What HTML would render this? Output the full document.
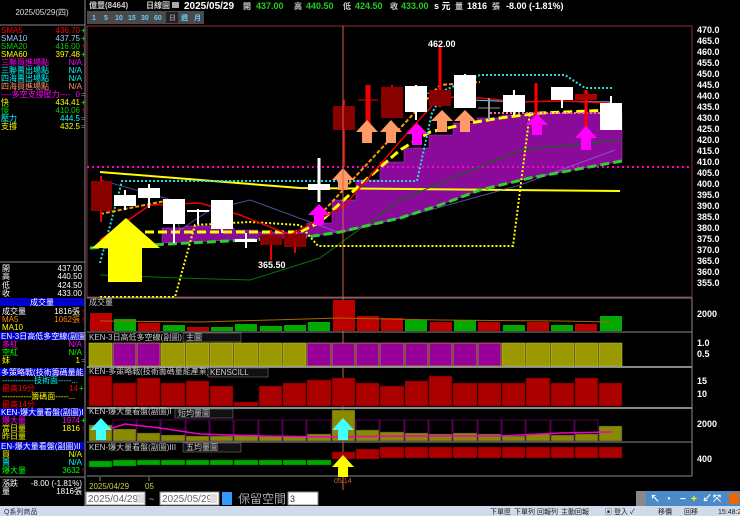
<!DOCTYPE html>
<html><head><meta charset="utf-8">
<style>
html,body{margin:0;padding:0;background:#000;width:740px;height:516px;overflow:hidden}
svg{display:block}
text{font-family:"Liberation Sans","Noto Sans CJK TC",sans-serif}
.s{font-size:8px}
.ax{font-size:9px;fill:#fff;font-weight:bold}
</style></head><body>
<svg width="740" height="516" viewBox="0 0 740 516" xmlns="http://www.w3.org/2000/svg">
<rect width="740" height="516" fill="#000"/>
<!-- left panel -->
<text x="42" y="15" class="s" fill="#ddd" text-anchor="middle">2025/05/29(四)</text>
<line x1="85" y1="0" x2="85" y2="506" stroke="#888"/>
<line x1="0" y1="25" x2="85" y2="25" stroke="#888"/>
<g class="s">
<text x="1" y="33" fill="#f00">SMA5</text><text x="80" y="33" fill="#f00" text-anchor="end">436.70</text><text x="81" y="33" fill="#0f0">+</text>
<text x="1" y="41" fill="#9cf">SMA10</text><text x="80" y="41" fill="#9cf" text-anchor="end">437.75</text><text x="81" y="41" fill="#0f0">+</text>
<text x="1" y="49" fill="#0c0">SMA20</text><text x="80" y="49" fill="#0c0" text-anchor="end">416.00</text><text x="81" y="49" fill="#f00">↑</text>
<text x="1" y="57" fill="#ff0">SMA60</text><text x="80" y="57" fill="#ff0" text-anchor="end">397.48</text><text x="81" y="57" fill="#0f0">+</text>
<text x="1" y="65" fill="#f0f">三聯買進場點</text><text x="82" y="65" fill="#f0f" text-anchor="end">N/A</text>
<text x="1" y="73" fill="#0ff">三聯賣出場點</text><text x="82" y="73" fill="#0ff" text-anchor="end">N/A</text>
<text x="1" y="81" fill="#0ff">四海賣出場點</text><text x="82" y="81" fill="#0ff" text-anchor="end">N/A</text>
<text x="1" y="89" fill="#f96">四海買進場點</text><text x="82" y="89" fill="#f96" text-anchor="end">N/A</text>
<text x="1" y="97" fill="#f0f">----多空支撐壓力----</text><text x="80" y="97" fill="#f0f" text-anchor="end">0</text><text x="81" y="97" fill="#888">=</text>
<text x="1" y="105" fill="#ff0">快</text><text x="80" y="105" fill="#ff0" text-anchor="end">434.41</text><text x="81" y="105" fill="#0f0">+</text>
<text x="1" y="113" fill="#0c0">慢</text><text x="80" y="113" fill="#0c0" text-anchor="end">410.06</text><text x="81" y="113" fill="#f00">↑</text>
<text x="1" y="121" fill="#0ff">壓力</text><text x="80" y="121" fill="#0ff" text-anchor="end">444.5</text><text x="81" y="121" fill="#888">=</text>
<text x="1" y="129" fill="#ff0">支撐</text><text x="80" y="129" fill="#ff0" text-anchor="end">432.5</text><text x="81" y="129" fill="#888">=</text>
<line x1="0" y1="262" x2="85" y2="262" stroke="#888"/>
<text x="2" y="271" fill="#fff">開</text><text x="82" y="271" fill="#fff" text-anchor="end">437.00</text>
<text x="2" y="279" fill="#fff">高</text><text x="82" y="279" fill="#fff" text-anchor="end">440.50</text>
<text x="2" y="288" fill="#fff">低</text><text x="82" y="288" fill="#fff" text-anchor="end">424.50</text>
<text x="2" y="296" fill="#fff">收</text><text x="82" y="296" fill="#fff" text-anchor="end">433.00</text>
<rect x="0" y="298" width="84" height="8" fill="#00c"/><text x="42" y="305" fill="#fff" text-anchor="middle">成交量</text>
<text x="2" y="314" fill="#fff">成交量</text><text x="80" y="314" fill="#fff" text-anchor="end">1816張</text><text x="81" y="314" fill="#f00">↑</text>
<text x="2" y="322" fill="#f80">MA5</text><text x="80" y="322" fill="#f80" text-anchor="end">1062張</text><text x="81" y="322" fill="#f00">↑</text>
<text x="2" y="330" fill="#ff0">MA10</text>
<rect x="0" y="332" width="84" height="8" fill="#00c"/><text x="1" y="339" fill="#fff">EN-3日高低多空線(副圖</text>
<text x="2" y="347" fill="#f0f">多紅</text><text x="82" y="347" fill="#f0f" text-anchor="end">N/A</text>
<text x="2" y="355" fill="#0f0">空紅</text><text x="82" y="355" fill="#0f0" text-anchor="end">N/A</text>
<text x="2" y="363" fill="#ff0">妹</text><text x="80" y="363" fill="#ff0" text-anchor="end">1</text><text x="81" y="363" fill="#888">=</text>
<rect x="0" y="368" width="84" height="8" fill="#00c"/><text x="1" y="375" fill="#fff">多策略戰(技術籌碼量能</text>
<text x="2" y="383" fill="#0ff">------------技術面-----...</text>
<text x="2" y="391" fill="#f00">最高19分</text><text x="78" y="391" fill="#f00" text-anchor="end">14</text><text x="79" y="391" fill="#0f0">+</text>
<text x="2" y="399" fill="#ff0">-----------籌碼面-----...</text>
<text x="2" y="407" fill="#f00">最高14分</text>
<rect x="0" y="408" width="84" height="8" fill="#00c"/><text x="1" y="415" fill="#fff">KEN-爆大量看盤(副圖)I</text>
<text x="2" y="423" fill="#f0f">爆大量</text><text x="80" y="423" fill="#f0f" text-anchor="end">1974</text><text x="81" y="423" fill="#0f0">+</text>
<text x="2" y="431" fill="#ff0">當日量</text><text x="80" y="431" fill="#ff0" text-anchor="end">1816</text><text x="81" y="431" fill="#f00">↑</text>
<text x="2" y="439" fill="#ff0">昨日量</text>
<rect x="0" y="442" width="84" height="8" fill="#00c"/><text x="1" y="449" fill="#fff">EN-爆大量看盤(副圖)II</text>
<text x="2" y="457" fill="#ff0">買</text><text x="82" y="457" fill="#ff0" text-anchor="end">N/A</text>
<text x="2" y="465" fill="#0ff">賣</text><text x="82" y="465" fill="#0ff" text-anchor="end">N/A</text>
<text x="2" y="473" fill="#0f0">爆大量</text><text x="80" y="473" fill="#0f0" text-anchor="end">3632</text><text x="81" y="473" fill="#f00">↑</text>
<line x1="0" y1="477" x2="85" y2="477" stroke="#888"/>
<text x="2" y="486" fill="#fff">漲跌</text><text x="82" y="486" fill="#fff" text-anchor="end">-8.00 (-1.81%)</text>
<text x="2" y="494" fill="#fff">量</text><text x="82" y="494" fill="#fff" text-anchor="end">1816張</text>
</g>
<!-- top bar -->
<g font-size="9" font-weight="bold">
<text x="89" y="8" fill="#ccc" font-size="8">億豐(8464)</text>
<text x="146" y="8" fill="#ccc" font-size="8">日線圖</text>
<rect x="172" y="2" width="7" height="6" fill="#aaa"/>
<text x="184" y="9" fill="#fff" font-size="10">2025/05/29</text>
<text x="243" y="9" fill="#ccc" font-size="8">開</text><text x="256" y="9" fill="#2c2">437.00</text>
<text x="294" y="9" fill="#ccc" font-size="8">高</text><text x="306" y="9" fill="#2c2">440.50</text>
<text x="343" y="9" fill="#ccc" font-size="8">低</text><text x="355" y="9" fill="#2c2">424.50</text>
<text x="390" y="9" fill="#ccc" font-size="8">收</text><text x="401" y="9" fill="#2c2">433.00</text>
<text x="434" y="9" fill="#fff">s 元</text>
<text x="455" y="9" fill="#ccc" font-size="8">量</text><text x="467" y="9" fill="#fff">1816</text><text x="492" y="9" fill="#ccc" font-size="8">張</text>
<text x="506" y="9" fill="#fff">-8.00 (-1.81%)</text>
</g>
<rect x="87" y="11" width="117" height="13" fill="#4a4a4a"/>
<g font-size="7" fill="#6cf" font-weight="bold">
<text x="92" y="20">1</text><text x="104" y="20">5</text><text x="115" y="20">10</text><text x="128" y="20">15</text><text x="141" y="20">30</text><text x="154" y="20">60</text>
<rect x="166" y="12" width="12" height="11" fill="#222"/><text x="169" y="20" fill="#888">日</text>
<text x="181" y="20">週</text><text x="194" y="20">月</text></g>
<!-- main chart frame -->
<rect x="87" y="26" width="605" height="271" fill="none" stroke="#8a3040"/>
<!-- right axis -->
<g class="ax">
<text x="697" y="33">470.0</text><text x="697" y="44">465.0</text><text x="697" y="55">460.0</text><text x="697" y="66">455.0</text><text x="697" y="77">450.0</text><text x="697" y="88">445.0</text><text x="697" y="99">440.0</text><text x="697" y="110">435.0</text><text x="697" y="121">430.0</text><text x="697" y="132">425.0</text><text x="697" y="143">420.0</text><text x="697" y="154">415.0</text><text x="697" y="165">410.0</text><text x="697" y="176">405.0</text><text x="697" y="187">400.0</text><text x="697" y="198">395.0</text><text x="697" y="209">390.0</text><text x="697" y="220">385.0</text><text x="697" y="231">380.0</text><text x="697" y="242">375.0</text><text x="697" y="253">370.0</text><text x="697" y="264">365.0</text><text x="697" y="275">360.0</text><text x="697" y="286">355.0</text>
<text x="697" y="317">2000</text><text x="697" y="346">1.0</text><text x="697" y="357">0.5</text>
<text x="697" y="384">15</text><text x="697" y="397">10</text><text x="697" y="427">2000</text><text x="697" y="462">400</text>
</g>
<!-- purple cloud -->
<g fill="#8a0a9a" stroke="#b040c0" stroke-width="0.5">
<path d="M162,242 L162,228 L186,228 L186,226 L210,226 L210,228 L234,228 L234,230 L258,230 L258,232 L307,232 L307,223 L332,223 L332,200 L356,200 L356,180 L380,180 L380,162 L404,162 L404,148 L429,148 L429,135 L453,135 L453,123 L477,123 L477,118 L502,118 L502,115 L526,115 L526,113 L622,113 L622,161 L600,165 L530,178 L480,190 L440,205 L400,218 L340,232 L307,237 L162,243 Z"/>
</g>
<!-- lines -->
<line x1="87" y1="167" x2="692" y2="167" stroke="#f0c" stroke-width="2" stroke-dasharray="2,3"/>
<polyline points="100,172 300,188 620,191" fill="none" stroke="#ff0" stroke-width="2"/>
<polyline points="100,180 172,200 180,230 210,210 250,200 340,233 430,210 520,185 615,150" fill="none" stroke="#8080ff" stroke-width="1" opacity="0.6"/>
<polyline points="100,275 180,278 250,280 320,258 400,200 520,150 620,140" fill="none" stroke="#070" stroke-width="1"/>
<polyline points="90,248 307,237 340,232 400,218 440,205 480,190 530,178 600,165 622,161" fill="none" stroke="#3c3" stroke-width="3" stroke-dasharray="9,4"/>
<polyline points="145,232 300,232 320,222 360,185 400,150 430,132 470,123 500,118 540,113 615,110" fill="none" stroke="#ff0" stroke-width="3" stroke-dasharray="9,4"/>
<polyline points="100,297 175,297 195,225 250,222 300,225 318,246 513,246 530,112" fill="none" stroke="#ff0" stroke-width="2" stroke-dasharray="2,2"/>
<polyline points="100,263 122,181 417,181 432,113 445,90 480,75 565,75 585,88 612,88" fill="none" stroke="#3dd" stroke-width="2" stroke-dasharray="2,2"/>
<polyline points="100,214 170,200" fill="none" stroke="#f90" stroke-width="2" stroke-dasharray="4,2"/>
<polyline points="320,215 440,85 480,82" fill="none" stroke="#f90" stroke-width="2" stroke-dasharray="4,2"/>
<polyline points="490,113 612,113" fill="none" stroke="#f6a" stroke-width="2" stroke-dasharray="2,2"/>
<polyline points="420,92 470,100 520,102 560,101 612,102" fill="none" stroke="#6cf" stroke-width="1"/>
<polyline points="100,240 150,205 200,203 240,215 290,235 300,230 345,205 410,130 440,97 480,98 520,102 560,101 610,103" fill="none" stroke="#e00" stroke-width="1.5"/>
<!-- candles -->
<g>
<line x1="101" y1="176" x2="101" y2="222" stroke="#e00" stroke-width="2"/><rect x="91" y="181" width="21" height="30" fill="#800"/>
<line x1="125" y1="190" x2="125" y2="210" stroke="#fff" stroke-width="2"/><rect x="114" y="195" width="22" height="11" fill="#fff"/>
<line x1="149" y1="184" x2="149" y2="208" stroke="#fff" stroke-width="2"/><rect x="138" y="188" width="22" height="10" fill="#fff"/>
<line x1="174" y1="199" x2="174" y2="243" stroke="#fff" stroke-width="2"/><rect x="163" y="199" width="22" height="25" fill="#fff"/>
<line x1="198" y1="209" x2="198" y2="224" stroke="#fff" stroke-width="2"/><rect x="187" y="210" width="22" height="2" fill="#fff"/>
<line x1="222" y1="200" x2="222" y2="233" stroke="#fff" stroke-width="2"/><rect x="211" y="200" width="22" height="29" fill="#fff"/>
<line x1="246" y1="233" x2="246" y2="248" stroke="#fff" stroke-width="2"/><rect x="235" y="239" width="22" height="3" fill="#fff"/>
<line x1="271" y1="230" x2="271" y2="260" stroke="#e00" stroke-width="2"/><rect x="260" y="235" width="22" height="10" fill="#800"/>
<line x1="295" y1="230" x2="295" y2="253" stroke="#e00" stroke-width="2"/><rect x="284" y="234" width="22" height="13" fill="#800"/>
<line x1="344" y1="100" x2="344" y2="167" stroke="#e00" stroke-width="2"/><rect x="333" y="106" width="22" height="24" fill="#800"/>
<line x1="368" y1="85" x2="368" y2="132" stroke="#e00" stroke-width="5"/><line x1="358" y1="100" x2="378" y2="100" stroke="#e00"/>
<line x1="392" y1="85" x2="392" y2="118" stroke="#e00" stroke-width="2"/><rect x="381" y="87" width="22" height="31" fill="#800"/>
<line x1="416" y1="85" x2="416" y2="120" stroke="#fff" stroke-width="2"/><rect x="405" y="86" width="22" height="26" fill="#fff"/>
<line x1="440" y1="47" x2="440" y2="107" stroke="#f00" stroke-width="3"/><rect x="429" y="90" width="22" height="16" fill="#800"/>
<line x1="465" y1="74" x2="465" y2="108" stroke="#fff" stroke-width="2"/><rect x="454" y="75" width="22" height="33" fill="#fff"/>
<line x1="489" y1="98" x2="489" y2="120" stroke="#999" stroke-width="2"/><line x1="478" y1="108" x2="500" y2="108" stroke="#999"/>
<line x1="514" y1="90" x2="514" y2="115" stroke="#fff" stroke-width="2"/><rect x="503" y="95" width="22" height="17" fill="#fff"/>
<line x1="536" y1="83" x2="536" y2="130" stroke="#f00" stroke-width="3"/>
<line x1="562" y1="87" x2="562" y2="108" stroke="#fff" stroke-width="2"/><rect x="551" y="87" width="22" height="13" fill="#fff"/>
<line x1="586" y1="90" x2="586" y2="130" stroke="#f00" stroke-width="3"/><rect x="575" y="94" width="22" height="6" fill="#a00"/>
<line x1="611" y1="96" x2="611" y2="130" stroke="#fff" stroke-width="2"/><rect x="600" y="103" width="22" height="27" fill="#fff"/>
</g>
<!-- arrows -->
<polygon points="92,248 126,218 160,248 142,248 142,282 108,282 108,248" fill="#ff0"/>
<g fill="#f96">
<polygon points="332,180 343,168 354,180 348,180 348,190 338,190 338,180"/>
<polygon points="356,132 367,120 378,132 372,132 372,143 362,143 362,132"/>
<polygon points="380,132 391,120 402,132 396,132 396,143 386,143 386,132"/>
<polygon points="431,121 442,110 453,121 447,121 447,132 437,132 437,121"/>
<polygon points="454,121 465,110 476,121 470,121 470,132 460,132 460,121"/>
</g>
<g fill="#f0f">
<polygon points="308,215 319,204 330,215 324,215 324,225 314,225 314,215"/>
<polygon points="406,134 417,123 428,134 422,134 422,145 412,145 412,134"/>
<polygon points="526,125 537,114 548,125 542,125 542,135 532,135 532,125"/>
<polygon points="575,138 586,126 597,138 591,138 591,150 581,150 581,138"/>
</g>
<line x1="343" y1="26" x2="343" y2="490" stroke="#c64" stroke-width="1"/>
<line x1="319" y1="158" x2="319" y2="202" stroke="#fff" stroke-width="3"/><rect x="308" y="184" width="22" height="6" fill="#fff"/>
<text x="428" y="47" fill="#fff" font-size="9" font-weight="bold">462.00</text>
<text x="258" y="268" fill="#fff" font-size="9" font-weight="bold">365.50</text>
<!-- panel separators -->
<g stroke="#888"><line x1="87" y1="298" x2="692" y2="298"/><line x1="87" y1="332" x2="692" y2="332"/><line x1="87" y1="367" x2="692" y2="367" stroke-width="2"/><line x1="87" y1="408" x2="692" y2="408" stroke-width="2"/><line x1="87" y1="442" x2="692" y2="442"/><line x1="87" y1="476" x2="692" y2="476"/><line x1="692" y1="298" x2="692" y2="476"/></g>
<!-- volume -->
<g>
<rect x="90" y="313" width="22" height="18" fill="#b00"/><rect x="114" y="319" width="22" height="12" fill="#0a0"/><rect x="138" y="323" width="22" height="8" fill="#b00"/><rect x="163" y="325" width="22" height="6" fill="#0a0"/><rect x="187" y="327" width="22" height="4" fill="#b00"/><rect x="211" y="327" width="22" height="4" fill="#0a0"/><rect x="235" y="324" width="22" height="7" fill="#0a0"/><rect x="260" y="326" width="22" height="5" fill="#0a0"/><rect x="284" y="325" width="22" height="6" fill="#0a0"/><rect x="308" y="322" width="22" height="9" fill="#0a0"/><rect x="333" y="300" width="22" height="31" fill="#b00"/><rect x="357" y="316" width="22" height="15" fill="#b00"/><rect x="381" y="318" width="22" height="13" fill="#b00"/><rect x="405" y="320" width="22" height="11" fill="#0a0"/><rect x="430" y="322" width="22" height="9" fill="#b00"/><rect x="454" y="320" width="22" height="11" fill="#0a0"/><rect x="478" y="322" width="22" height="9" fill="#b00"/><rect x="503" y="325" width="22" height="6" fill="#0a0"/><rect x="527" y="322" width="22" height="9" fill="#b00"/><rect x="551" y="325" width="22" height="6" fill="#0a0"/><rect x="575" y="324" width="22" height="7" fill="#b00"/><rect x="600" y="316" width="22" height="15" fill="#0a0"/>
<polyline points="100,321 200,322 340,318 440,320 560,321 612,322" fill="none" stroke="#a60" stroke-width="1"/>
</g>
<text x="89" y="305" class="s" fill="#ccc">成交量</text>
<!-- panel 2 -->
<g stroke="#cc4" stroke-width="0.5">
<rect x="89" y="343" width="23" height="23" fill="#9a9a00"/><rect x="113" y="343" width="23" height="23" fill="#909"/><rect x="137" y="343" width="23" height="23" fill="#909"/>
<rect x="161" y="343" width="24" height="23" fill="#9a9a00"/><rect x="186" y="343" width="23" height="23" fill="#9a9a00"/><rect x="210" y="343" width="23" height="23" fill="#9a9a00"/><rect x="234" y="343" width="24" height="23" fill="#9a9a00"/><rect x="259" y="343" width="23" height="23" fill="#9a9a00"/><rect x="283" y="343" width="23" height="23" fill="#9a9a00"/>
<rect x="307" y="343" width="24" height="23" fill="#909"/><rect x="332" y="343" width="23" height="23" fill="#909"/><rect x="356" y="343" width="23" height="23" fill="#909"/><rect x="380" y="343" width="24" height="23" fill="#909"/><rect x="405" y="343" width="23" height="23" fill="#909"/><rect x="429" y="343" width="23" height="23" fill="#909"/><rect x="453" y="343" width="24" height="23" fill="#909"/><rect x="478" y="343" width="23" height="23" fill="#909"/>
<rect x="502" y="343" width="23" height="23" fill="#9a9a00"/><rect x="526" y="343" width="24" height="23" fill="#9a9a00"/><rect x="551" y="343" width="23" height="23" fill="#9a9a00"/><rect x="575" y="343" width="23" height="23" fill="#9a9a00"/><rect x="599" y="343" width="23" height="23" fill="#9a9a00"/>
</g>
<text x="89" y="340" class="s" fill="#ccc">KEN-3日高低多空線(副圖)</text>
<rect x="183" y="333" width="58" height="9" fill="#111" stroke="#888" stroke-width="0.5"/><text x="186" y="340" class="s" fill="#ccc">主圖</text>
<!-- panel 3 -->
<g fill="#a00" stroke="#500" stroke-width="0.5">
<rect x="89" y="376" width="23" height="30"/><rect x="113" y="383" width="23" height="23"/><rect x="137" y="378" width="23" height="28"/><rect x="161" y="383" width="24" height="23"/><rect x="186" y="381" width="23" height="25"/><rect x="210" y="386" width="23" height="20"/><rect x="234" y="402" width="24" height="4"/><rect x="259" y="386" width="23" height="20"/><rect x="283" y="383" width="23" height="23"/><rect x="307" y="380" width="24" height="26"/><rect x="332" y="378" width="23" height="28"/><rect x="356" y="383" width="23" height="23"/><rect x="380" y="386" width="24" height="20"/><rect x="405" y="381" width="23" height="25"/><rect x="429" y="376" width="23" height="30"/><rect x="453" y="383" width="24" height="23"/><rect x="478" y="383" width="23" height="23"/><rect x="502" y="383" width="23" height="23"/><rect x="526" y="378" width="24" height="28"/><rect x="551" y="383" width="23" height="23"/><rect x="575" y="378" width="23" height="28"/><rect x="599" y="383" width="23" height="23"/>
</g>
<text x="89" y="374" class="s" fill="#ccc">KEN-多策略戰(技術籌碼量能產業)</text>
<rect x="208" y="368" width="60" height="9" fill="#111" stroke="#888" stroke-width="0.5"/><text x="210" y="375" class="s" fill="#ccc">KENSCILL</text>
<!-- panel 4 -->
<g fill="none" stroke="#505" stroke-width="1">
<rect x="113" y="420" width="23" height="21"/><rect x="137" y="420" width="23" height="21"/><rect x="161" y="420" width="24" height="21"/><rect x="186" y="420" width="23" height="21"/><rect x="210" y="420" width="23" height="21"/><rect x="234" y="420" width="24" height="21"/><rect x="259" y="420" width="23" height="21"/><rect x="283" y="420" width="23" height="21"/><rect x="307" y="420" width="24" height="21"/><rect x="356" y="420" width="23" height="21"/><rect x="380" y="420" width="24" height="21"/><rect x="405" y="420" width="23" height="21"/><rect x="429" y="420" width="23" height="21"/><rect x="453" y="420" width="24" height="21"/><rect x="478" y="420" width="23" height="21"/><rect x="502" y="420" width="23" height="21"/><rect x="526" y="420" width="24" height="21"/><rect x="551" y="420" width="23" height="21"/><rect x="575" y="420" width="23" height="21"/>
</g>
<g fill="#8a8a00" stroke="#333" stroke-width="0.5">
<rect x="89" y="425" width="23" height="16"/><rect x="113" y="429" width="23" height="12"/><rect x="137" y="433" width="23" height="8"/><rect x="161" y="435" width="24" height="6"/><rect x="186" y="436" width="23" height="5"/><rect x="210" y="436" width="23" height="5"/><rect x="234" y="435" width="24" height="6"/><rect x="259" y="436" width="23" height="5"/><rect x="283" y="436" width="23" height="5"/><rect x="307" y="434" width="24" height="7"/><rect x="332" y="410" width="23" height="31"/><rect x="356" y="430" width="23" height="11"/><rect x="380" y="432" width="24" height="9"/><rect x="405" y="433" width="23" height="8"/><rect x="429" y="434" width="23" height="7"/><rect x="453" y="433" width="24" height="8"/><rect x="478" y="434" width="23" height="7"/><rect x="502" y="436" width="23" height="5"/><rect x="526" y="434" width="24" height="7"/><rect x="551" y="435" width="23" height="6"/><rect x="575" y="434" width="23" height="7"/><rect x="599" y="426" width="23" height="15"/>
</g>
<polyline points="100,432 125,424 160,428 200,434 260,436 330,437 400,436 500,436 560,433 612,432" fill="none" stroke="#e0c" stroke-width="1.5"/>
<polygon points="90,430 101,418 112,430 106,430 106,440 96,440 96,430" fill="#4ff"/>
<polygon points="332,430 343,418 354,430 348,430 348,440 338,440 338,430" fill="#4ff"/>
<text x="89" y="414" class="s" fill="#ccc">KEN-爆大量看盤(副圖)I</text>
<rect x="175" y="409" width="58" height="9" fill="#111" stroke="#888" stroke-width="0.5"/><text x="178" y="416" class="s" fill="#ccc">短均量圖</text>
<!-- panel 5 -->
<g fill="#0a0" stroke="#050" stroke-width="0.5">
<rect x="89" y="461" width="23" height="6"/><rect x="113" y="460" width="23" height="6"/><rect x="137" y="460" width="23" height="5"/><rect x="161" y="460" width="24" height="5"/><rect x="186" y="460" width="23" height="5"/><rect x="210" y="460" width="23" height="5"/><rect x="234" y="460" width="24" height="5"/><rect x="259" y="460" width="23" height="5"/><rect x="283" y="460" width="23" height="5"/><rect x="307" y="460" width="24" height="5"/>
</g>
<g fill="#a00" stroke="#500" stroke-width="0.5">
<rect x="332" y="452" width="23" height="7"/><rect x="356" y="449" width="23" height="10"/><rect x="380" y="447" width="24" height="11"/><rect x="405" y="447" width="23" height="11"/><rect x="429" y="447" width="23" height="11"/><rect x="453" y="447" width="24" height="11"/><rect x="478" y="447" width="23" height="11"/><rect x="502" y="447" width="23" height="11"/><rect x="526" y="447" width="24" height="11"/><rect x="551" y="447" width="23" height="11"/><rect x="575" y="447" width="23" height="11"/><rect x="599" y="447" width="23" height="11"/>
</g>
<polygon points="332,467 343,455 354,467 348,467 348,477 338,477 338,467" fill="#ff0"/>
<text x="89" y="450" class="s" fill="#ccc">KEN-爆大量看盤(副圖)III</text>
<rect x="183" y="443" width="58" height="9" fill="#111" stroke="#888" stroke-width="0.5"/><text x="186" y="450" class="s" fill="#ccc">五均量圖</text>
<!-- date row -->
<line x1="100" y1="477" x2="100" y2="481" stroke="#888"/><line x1="149" y1="477" x2="149" y2="481" stroke="#888"/>
<text x="89" y="489" font-size="8" fill="#cc4">2025/04/29</text>
<text x="145" y="489" font-size="8" fill="#cc4">05</text>
<text x="334" y="483" font-size="7" fill="#c64">05/14</text>
<!-- inputs row -->
<rect x="86" y="492" width="59" height="13" fill="#fff" stroke="#888"/><text x="88" y="502" font-size="10" fill="#666" font-family="Liberation Serif">2025/04/29</text><rect x="137" y="494" width="7" height="9" fill="#ddd"/>
<text x="149" y="502" font-size="9" fill="#ccc">~</text>
<rect x="160" y="492" width="59" height="13" fill="#fff" stroke="#888"/><text x="162" y="502" font-size="10" fill="#666" font-family="Liberation Serif">2025/05/29</text><rect x="210" y="494" width="7" height="9" fill="#ddd"/>
<rect x="222" y="492" width="10" height="13" fill="#39f"/>
<text x="238" y="503" font-size="12" fill="#aaa">保留空間</text>
<rect x="288" y="492" width="30" height="13" fill="#fff" stroke="#888"/><text x="290" y="502" font-size="9" fill="#333">3</text>
<rect x="636" y="491" width="104" height="15" fill="#4a8ac8"/>
<rect x="636" y="491" width="10" height="15" fill="#888"/>
<g fill="#fff" font-size="10" font-weight="bold"><text x="650" y="502">↖</text><text x="665" y="502">◔</text><text x="680" y="502">−</text><text x="691" y="502" fill="#ff0">+</text><text x="702" y="502">↙</text><text x="713" y="502">⤧</text></g>
<rect x="729" y="493" width="10" height="11" fill="#e60"/>
<!-- status bar -->
<rect x="0" y="506" width="740" height="10" fill="#cfdbe8"/>
<text x="4" y="514" font-size="7" fill="#335">Q系列商品</text>
<g font-size="7" fill="#222"><text x="490" y="514">下單匣</text><text x="514" y="514">下單列</text><text x="537" y="514">回報列</text><text x="561" y="514">主動回報</text><text x="605" y="514">▣ 登入 ✓</text><text x="658" y="514">移價</text><text x="684" y="514">回移</text><text x="718" y="514">15:48:26</text></g>
</svg>
</body></html>
